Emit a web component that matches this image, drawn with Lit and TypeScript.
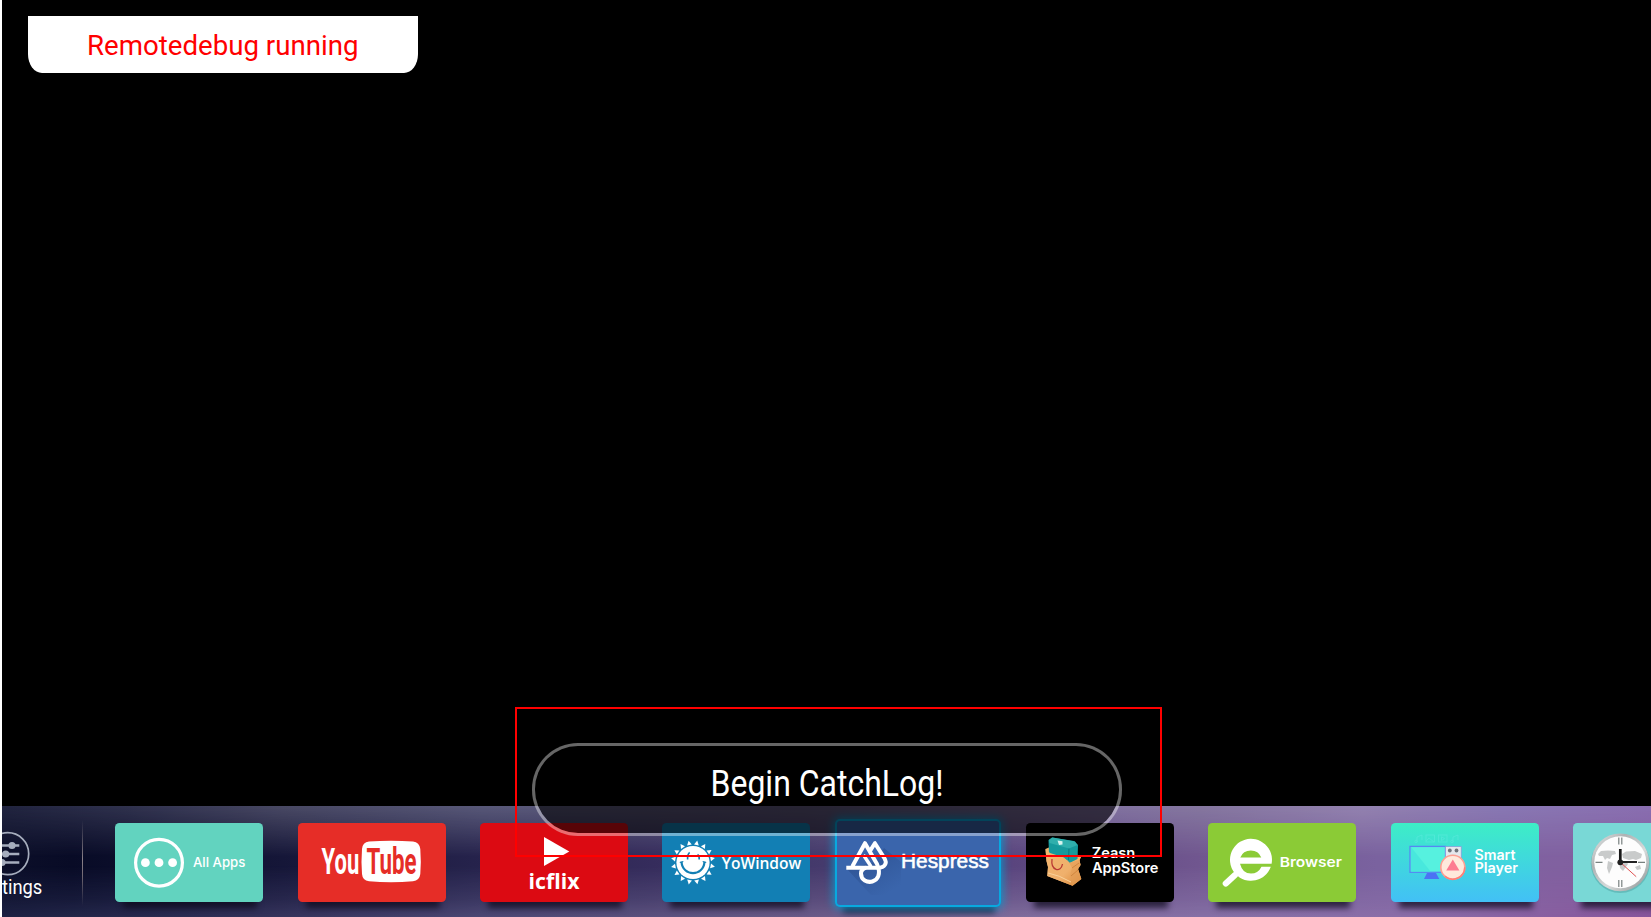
import { LitElement, html, svg, css } from "lit";
import { customElement } from "lit/decorators.js";

const label = (
  text: string,
  x: number,
  y: number,
  size: number,
  width: number,
  cls = "inter"
) => svg`<text class=${cls} x=${x} y=${y} font-size=${size} textLength=${width} lengthAdjust="spacingAndGlyphs">${text}</text>`;

const allApps = svg`
  <circle cx="44" cy="39.7" r="23.4" fill="none" stroke="#fff" stroke-width="3.2"/>
  <circle cx="30.4" cy="39.7" r="4.4" fill="#fff"/>
  <circle cx="44" cy="39.7" r="4.4" fill="#fff"/>
  <circle cx="57.6" cy="39.7" r="4.4" fill="#fff"/>
  ${label("All Apps", 78, 44, 13.6, 52.4)}`;

const youtube = svg`
  ${label("You", 23.6, 51.2, 37, 37.6, "tube")}
  <path d="M71 18.4Q93 17 115 18.4Q121.500 19 122.300 26Q123.300 38.500 122.300 51Q121.500 57.500 115 58.300Q93 60 71 58.300Q64.500 57.500 64 51Q63 38.500 64 26Q64.500 19 71 18.400Z" fill="#fff"/>
  ${label("Tube", 68.6, 51.2, 37, 50, "tube red")}`;

const icflix = svg`
  <path d="M64 14L89.300 28.600L64 43Z" fill="#fff"/>
  ${label("icflix", 48.600, 65.600, 21, 51, "open bold")}`;

const rays = Array.from({ length: 16 }, (_, i) => i * 22.5 + 11);
const yowindow = svg`
  ${rays.map((a) => svg`<path transform=${`rotate(${a} 31 39.500)`} d="M28.600 21.600L31 17.200L33.400 21.600Z" fill="#fff"/>`)}
  <circle cx="31" cy="39.500" r="16.600" fill="#fff"/>
  <path d="M19.500 38.700C20.500 54 41.500 54 42.500 38.700" fill="none" stroke="#127fb4" stroke-width="2.200"/>
  <path d="M17.800 39.500L21.300 38.500M40.700 38.500L44.200 39.500" stroke="#127fb4" stroke-width="1.200"/>
  <path d="M25.600 36.500Q25.400 31 27.700 29.500M37.200 36.500Q37.500 33 35.500 31.500" fill="none" stroke="#127fb4" stroke-width="1.600"/>
  ${label("YoWindow", 59.700, 46, 15.800, 79.600, "open")}`;

const hespress = svg`
  <defs><linearGradient id="cast" x1="0" y1="0" x2=".7" y2="1">
    <stop offset=".3" stop-color="#2c5090"/><stop offset="1" stop-color="#3a65ac"/>
  </linearGradient></defs>
  <path d="M12 50L36 76H66V43L49 29L40 43Z" fill="url(#cast)" opacity=".7"/>
  <g fill="none" stroke="#fff" stroke-width="4" stroke-linejoin="round">
    <path d="M11.300 48.700H43C50 48.700 52.500 44 49.300 39L39.900 24.200L35 32"/>
    <path d="M17.300 47.500L30 24.200L42 45C51 66 26 67.500 26 54.500C26 51.500 28 49.500 31 48.700"/>
    <path d="M28.500 36L36 47.500" stroke-width="3.400"/>
  </g>
  ${label("Hespress", 66, 48.900, 19.600, 88, "helv")}`;

const zeasn = svg`
  <defs><linearGradient id="bag" x1="0" y1="0" x2="1" y2="1">
    <stop offset="0" stop-color="#f3b56e"/><stop offset=".6" stop-color="#efb06c"/><stop offset="1" stop-color="#d98636"/>
  </linearGradient></defs>
  <path d="M19.500 26L24 24L55.500 33L53.500 37L54.500 42L52 46L55.300 56L46.500 62.700L21.300 53L22 44L20.500 38Z" fill="url(#bag)"/>
  <path d="M22.500 17L26 14.600L48 18L52 22L51.500 37L44 40L41 37L23 31Z" fill="#159a9c"/>
  <path d="M23 17L26.500 14.600L49 18.500L51.500 22L43 25.500L23.500 20Z" fill="#2fafac"/>
  <path d="M43 25.500L42.500 37" stroke="#0b777c" stroke-width="1"/>
  <path d="M31.500 17.500L36.500 18.300L36.500 21.500L33 22Z" fill="#d7f4ee"/>
  <path d="M19.500 26L24 30L38 34.500L43.500 40L51.500 36L55.500 33L53.500 37L54.500 42L52 46L55.300 56L46.500 62.700L21.300 53L22 44L20.500 38Z" fill="url(#bag)"/>
  <path d="M43.500 40L46 45L44 52L46.500 62.700L55.300 56L52 46L54.500 42L53.500 37Z" fill="#e39c55" opacity=".6"/>
  <path d="M46 45L53 40M45 53L52 47" fill="none" stroke="#c57a34" stroke-width=".7"/>
  <path d="M22 50Q33 52 45 59" fill="none" stroke="#f9d19a" stroke-width="1"/>
  <path d="M26 36C24.500 48 35 50 36.500 41" fill="none" stroke="#b93a34" stroke-width="1.300"/>
  ${label("Zeasn", 65.700, 34.900, 14.500, 43.600, "inter semi")}
  ${label("AppStore", 65.900, 49.600, 14.500, 66.400, "inter semi")}`;

const browser = svg`
  <path d="M27 52L17.800 60.500" stroke="#fff" stroke-width="6.200" stroke-linecap="round"/>
  <path fill-rule="evenodd" fill="#fff" d="M63.600 40.700A21 21 0 1 0 62.800 43.700H53.500Q50 50.600 43 50.600Q34.500 50.600 32 40.700ZM32.300 34.600Q35 27.600 42.900 27.600Q50.500 27.600 53.300 34.600Z"/>
  ${label("Browser", 71.700, 43.800, 13.500, 62.300, "inter semi")}`;

const smart = svg`
  <g fill="none" stroke="#59eadb" stroke-width=".8" opacity=".8">
    <path d="M26 19V14L31 12V17"/><circle cx="25" cy="18.500" r="1.300"/>
    <rect x="35" y="12" width="8.500" height="7"/><path d="M35 18L38 15L43 19"/>
    <rect x="47.500" y="12" width="8.500" height="7"/><path d="M50.500 13.800V17.500L53.500 15.600Z"/>
    <path d="M62 19V14L67 12V17"/><circle cx="61" cy="18.500" r="1.300"/>
  </g>
  <path d="M36 50H45L48.300 56H33Z" fill="#4b73f4"/>
  <rect x="19" y="23.400" width="35.500" height="25.900" fill="#56f1df" stroke="#5687f3" stroke-width="1.300"/>
  <path d="M20 24L40 49H20Z" fill="#3fe2dc" opacity=".6"/>
  <path d="M54.500 23.500H70.300V44H54.500Z" fill="#e5e7ec" stroke="#8493d8" stroke-width=".7"/>
  <circle cx="58.800" cy="27.500" r="1.900" fill="#70757c"/><circle cx="65.500" cy="27.500" r="1.900" fill="#70757c"/>
  <circle cx="61.800" cy="44.200" r="12" fill="#ffe9dc" stroke="#ff9f92" stroke-width="1.600"/>
  <path d="M73.800 44.200A12 12 0 0 1 54 53.300" fill="none" stroke="#ff7f78" stroke-width="1.600"/>
  <path d="M61.800 36.500L68.400 47.500H55.200Z" fill="#fd7b91"/>
  ${label("Smart", 83.500, 37.200, 14, 41, "inter semi")}
  ${label("Player", 83.500, 49.600, 14, 43.500, "inter semi")}`;

const clock = svg`
  <defs><linearGradient id="rim" x1="0" y1="0" x2="1" y2="1">
    <stop offset="0" stop-color="#eef0f0"/><stop offset=".3" stop-color="#aeb2b3"/><stop offset=".6" stop-color="#d8dbdb"/><stop offset="1" stop-color="#858b8c"/>
  </linearGradient></defs>
  <circle cx="47.300" cy="40.500" r="29.500" fill="#4e9f9f" opacity=".5"/>
  <circle cx="47.300" cy="39.300" r="28.900" fill="url(#rim)"/>
  <circle cx="47.300" cy="39.300" r="26" fill="#fdfdfd"/>
  <path d="M25 31L28 28L35 27.500L42 28L43 31L39 32L37 36L34 35L32 37L30 33L26 33ZM35 38L40 40L39 44L36 51L34 45ZM49 31L53 28.500L62 28L69 31L68 35L63 37L60 36L56 37L50 35ZM46 38H53L55 41L50 48L47 45ZM62 44L67 42L68 46L64 47Z" fill="#c9cbcb"/>
  <path d="M45.800 14.500V21.500M48.800 14.500V21.500M45.800 57V64M48.800 57V64M22.500 39.300H29.500M65 39.300H72" stroke="#78817f" stroke-width="1.200"/>
  <path d="M47.300 26V39.300" stroke="#171717" stroke-width="2.700"/>
  <path d="M47.300 39H64" stroke="#171717" stroke-width="1.900"/>
  <path d="M47.300 39.300L63.200 53.700" stroke="#e05252" stroke-width="1"/>
  <circle cx="47.300" cy="39.300" r="2.900" fill="#202020"/>`;

const apps = [
  { cls: "all", art: allApps },
  { cls: "youtube", art: youtube },
  { cls: "icflix", art: icflix },
  { cls: "yowindow", art: yowindow },
  { cls: "hespress", art: hespress },
  { cls: "zeasn", art: zeasn },
  { cls: "browser", art: browser },
  { cls: "smart", art: smart },
  { cls: "clock", art: clock },
];

@customElement("app-root")
export class AppRoot extends LitElement {
  static styles = css`
    :host {
      display: grid;
      grid-template-rows: 1fr 111px;
      box-sizing: border-box;
      position: relative;
      width: 1651px;
      height: 917px;
      border-left: 2px solid #fff;
      background: #000;
      overflow: hidden;
      font-family: Roboto, sans-serif;
    }
    .screen { padding: 15.600px 0 0 26.300px; }
    .toast {
      box-sizing: border-box;
      width: 390px;
      height: 57px;
      background: #fff;
      border-radius: 0 0 14px 14px / 0 0 19px 19px;
    }
    svg { display: block; overflow: visible; }
    .toast text { fill: #f00; }
    .dock {
      position: relative;
      isolation: isolate;
      display: flex;
      min-width: 0;
      overflow: hidden;
      box-shadow: inset 0 1px rgba(130, 125, 140, 0.35);
      background: linear-gradient(90deg, #0c0f29 0, #080b26 70px, #151638 280px, #25224b 470px, #352c5c 650px, #453a6c 820px, #5a457e 1010px, #70568f 1195px, #7a629f 1375px, #8161a0 1560px, #7f5c9e 1651px);
    }
    .dock::before, .dock::after { content: ""; position: absolute; inset: 0; z-index: -2; }
    .dock::before {
      background: linear-gradient(90deg, #21243f 0, #30324e 130px, #494964 280px, #585878 480px, #625b80 800px, #8071a0 1090px, #85779f 1200px, #9382af 1360px, #8878b3 1500px, #8a6eb0 1651px);
      mask-image: linear-gradient(#000 0, rgba(0,0,0,.7) 14%, transparent 46%);
    }
    .dock::after {
      background: linear-gradient(90deg, #1d2143 0, #292b50 150px, #38365f 300px, #4c4874 480px, #695a87 800px, #7e6c9b 1010px, #8570a5 1200px, #8a6da8 1400px, #87559b 1651px);
      mask-image: linear-gradient(transparent 54%, rgba(0,0,0,.55) 84%, #000);
    }
    .settings { flex: 0 0 80px; }
    .divider {
      flex: 0 0 1.300px;
      height: 86px;
      margin-top: 14px;
      background: linear-gradient(transparent, #8a8189 45%, #716973 65%, transparent);
    }
    .tiles { display: flex; gap: 34.170px; padding: 17.300px 0 0 32.150px; }
    .tile { position: relative; flex: 0 0 148px; height: 78.400px; border-radius: 4.500px; }
    .tile::before {
      content: "";
      position: absolute;
      z-index: -1;
      left: 8px;
      right: 6px;
      bottom: -6px;
      height: 16px;
      background: rgba(12, 8, 28, 0.72);
      filter: blur(3px);
    }
    .tile svg { width: 148px; height: 78.400px; }
    .all { background: #62d3bf; }
    .youtube { background: #e62d27; }
    .icflix { background: #dc0a12; }
    .yowindow { background: #127fb4; }
    .hespress {
      box-sizing: border-box;
      flex-basis: 165.600px;
      height: 87.400px;
      margin: -4px -8.800px 0;
      background: #3a65ac;
      border-radius: 5px;
      box-shadow: inset 0 0 0 2px #08a9df, 0 0 9px 2px rgba(9, 154, 207, 0.85);
    }
    .hespress svg { width: 165.600px; height: 87.400px; }
    .zeasn { background: #000; }
    .browser { background: #8bcb36; }
    .smart { background: linear-gradient(#3deec6, #42c0f6); }
    .clock { background: #79d8d6; }
    text { fill: #fff; }
    .inter { font-family: Inter, sans-serif; font-weight: 500; }
    .semi { font-weight: 600; }
    .tube { font-family: Roboto, sans-serif; font-weight: 700; }
    .red { fill: #e62d27; }
    .open { font-family: "Open Sans", sans-serif; font-weight: 600; }
    .bold { font-weight: 700; }
    .helv { font-family: "Liberation Sans", sans-serif; stroke: #fff; stroke-width: 0.5px; }
    .roboto { font-family: Roboto, sans-serif; }
    .dialog {
      position: absolute;
      box-sizing: border-box;
      left: 530px;
      top: 743px;
      width: 589.500px;
      height: 93px;
      border: 3px solid rgba(255, 255, 255, 0.4);
      border-radius: 46px;
      background: rgba(0, 0, 0, 0.6);
      background-clip: padding-box;
    }
    .marker {
      position: absolute;
      box-sizing: border-box;
      left: 513px;
      top: 707px;
      width: 647px;
      height: 150px;
      border: 2px solid #f00;
    }
  `;

  render() {
    return html`
      <div class="screen">
        <div class="toast">
          <svg width="390" height="57">${label("Remotedebug running", 59, 39.200, 27.200, 271.500, "roboto")}</svg>
        </div>
      </div>
      <div class="dock">
        <svg class="settings" width="80" height="111" viewBox="0 0 80 111">
          <g fill="none" stroke="#a6adbd">
            <circle cx="5.700" cy="47.700" r="21" stroke-width="1.700"/>
            <path d="M-6 39.500H17.300M-6 48H17.300M-6 56.500H17.300" stroke-width="2.600"/>
          </g>
          <g fill="#a6adbd">
            <circle cx="10" cy="39.500" r="3.600"/><circle cx="3.700" cy="48" r="3.600"/><circle cx="0" cy="56.500" r="3.600"/>
          </g>
          <text class="roboto" x="40.300" y="88.300" font-size="19.500" text-anchor="end" textLength="67" lengthAdjust="spacingAndGlyphs">Settings</text>
        </svg>
        <div class="divider"></div>
        <div class="tiles">
          ${apps.map((app) => html`<div class="tile ${app.cls}"><svg>${app.art}</svg></div>`)}
        </div>
      </div>
      <div class="dialog">
        <svg width="584" height="87">${label("Begin CatchLog!", 175.500, 50, 36.200, 233, "roboto")}</svg>
      </div>
      <div class="marker"></div>
    `;
  }
}
